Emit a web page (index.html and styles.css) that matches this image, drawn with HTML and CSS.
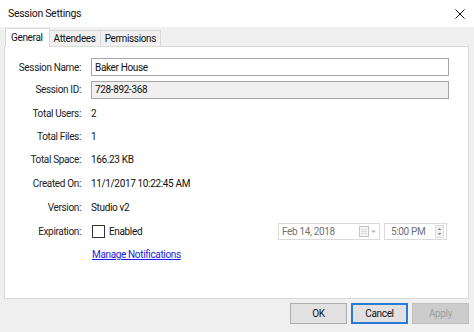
FILE: index.html
```html
<!DOCTYPE html>
<html lang="en">
<head>
    <meta charset="UTF-8">
    <title>Session Settings</title>
    <link rel="stylesheet" href="styles.css">
</head>
<body>
<div class="dialog">

    <!-- Title bar -->
    <div class="titlebar">
        <span class="title">Session Settings</span>
        <span class="close">
            <svg width="10" height="10" viewBox="0 0 10 10">
                <path d="M0.5 0.5 L9.5 9.5 M9.5 0.5 L0.5 9.5" stroke="#111" stroke-width="1"/>
            </svg>
        </span>
    </div>

    <!-- Tabs -->
    <div class="tabs">
        <div class="tab active">General</div>
        <div class="tab">Attendees</div>
        <div class="tab">Permissions</div>
    </div>

    <!-- General page -->
    <div class="panel">
        <div class="form">
            <div class="label">Session Name:</div>
            <div class="value"><input class="field" type="text" value="Baker House"></div>

            <div class="label">Session ID:</div>
            <div class="value"><input class="field readonly" type="text" value="728-892-368" readonly></div>

            <div class="label">Total Users:</div>
            <div class="value">2</div>

            <div class="label">Total Files:</div>
            <div class="value">1</div>

            <div class="label">Total Space:</div>
            <div class="value">166.23 KB</div>

            <div class="label">Created On:</div>
            <div class="value">11/1/2017 10:22:45 AM</div>

            <div class="label">Version:</div>
            <div class="value">Studio v2</div>

            <div class="label">Expiration:</div>
            <div class="value expiration">
                <span class="checkbox"></span>
                <span class="check-text">Enabled</span>
                <div class="pickers">
                    <div class="picker date">
                        <span>Feb 14, 2018</span>
                        <svg class="cal" width="18" height="11" viewBox="0 0 18 11">
                            <rect x="0.5" y="0.5" width="9" height="10" fill="#f4f4f4" stroke="#c4c4c4"/>
                            <path d="M2 3.5 H8 M2 5.5 H8 M2 7.5 H8" stroke="#dcdcdc"/>
                            <path d="M12 4.5 L17 4.5 L14.5 7 Z" fill="#b8b8b8"/>
                        </svg>
                    </div>
                    <div class="picker time">
                        <span>5:00 PM</span>
                        <svg class="spin" width="9" height="13" viewBox="0 0 9 13">
                            <rect x="0.5" y="0.5" width="8" height="12" fill="#f2f2f2" stroke="#dedede"/>
                            <path d="M2.5 5 L4.5 3 L6.5 5 Z M2.5 8 L4.5 10 L6.5 8 Z" fill="#8a8a8a"/>
                        </svg>
                    </div>
                </div>
            </div>

            <div class="label"></div>
            <div class="value"><a class="link" href="#">Manage Notifications</a></div>
        </div>
    </div>

    <!-- Buttons -->
    <div class="footer">
        <button class="btn">OK</button>
        <button class="btn btn-default">Cancel</button>
        <button class="btn" disabled>Apply</button>
    </div>

</div>
</body>
</html>
```

FILE: styles.css
```css
body {
    margin: 0;
    padding: 0;
    font-family: Roboto, "Liberation Sans", sans-serif;
    font-size: 10px;
    letter-spacing: -0.35px;
    color: #111;
    background-color: #f0f0f0;
}
.dialog {
    width: 474px;
    height: 332px;
    overflow: hidden;
    background-color: #f0f0f0;
}
/* Title bar */
.titlebar {
    height: 27px;
    background-color: #fff;
    display: flex;
    align-items: center;
    justify-content: space-between;
    padding: 0 9px 0 8px;
}
.title {
    font-size: 10.5px;
    letter-spacing: -0.3px;
    color: #111;
}
.close {
    display: flex;
    margin-top: 1px;
}
/* Tabs */
.tabs {
    height: 19px;
    display: flex;
    align-items: flex-end;
    padding-left: 5px;
}
.tab {
    height: 15px;
    line-height: 15px;
    padding: 0 4px;
    border: 1px solid #d9d9d9;
    border-bottom: none;
    background-color: #f0f0f0;
    margin-left: -1px;
}
.tab.active {
    height: 18px;
    line-height: 17px;
    margin-left: 0;
    margin-bottom: -1px;
    padding: 0 6px 0 5px;
    background-color: #fff;
    position: relative;
    z-index: 1;
}
/* Page */
.panel {
    height: 253px;
    box-sizing: border-box;
    margin: 0 5px 0 4px;
    border: 1px solid #d9d9d9;
    background-color: #fff;
}
.form {
    display: grid;
    grid-template-columns: 76px 358px;
    grid-template-rows: 22px 23px 25px 21px 24px 24px 24px 24px 23px;
    column-gap: 10px;
    padding-top: 9px;
    align-items: center;
}
.label {
    text-align: right;
    color: #222;
}
.value {
    display: flex;
    align-items: center;
}
.field {
    width: 100%;
    height: 18px;
    box-sizing: border-box;
    border: 1px solid #a5a5a5;
    padding: 0 3px;
    font: inherit;
    letter-spacing: inherit;
    color: #111;
    background-color: #fff;
    outline: none;
}
.field.readonly {
    background-color: #f0f0f0;
}
/* Expiration row */
.checkbox {
    width: 13px;
    height: 13px;
    box-sizing: border-box;
    border: 1px solid #333;
    background-color: #fff;
    margin-left: 1px;
}
.check-text {
    margin-left: 4px;
}
.pickers {
    display: flex;
    gap: 4px;
    margin-left: auto;
    margin-right: 2px;
}
.picker {
    height: 17px;
    box-sizing: border-box;
    border: 1px solid #dadada;
    display: flex;
    align-items: center;
    justify-content: space-between;
    padding: 0 2px 0 3px;
    color: #707070;
    background-color: #fff;
}
.picker.date {
    width: 102px;
}
.picker.time {
    width: 63px;
    padding-left: 6px;
}
.link {
    color: #1a1ae6;
    margin-left: 1px;
}
/* Buttons */
.footer {
    display: flex;
    justify-content: flex-end;
    gap: 4px;
    padding: 4px 5px 0 0;
}
.btn {
    width: 57px;
    height: 21px;
    border: 1px solid #adadad;
    background-color: #e1e1e1;
    font: inherit;
    letter-spacing: inherit;
    color: #111;
    padding: 0;
}
.btn-default {
    border: 2px solid #2b7bd4;
}
.btn:disabled {
    background-color: #cccccc;
    border-color: #bfbfbf;
    color: #a0a0a0;
}
```
